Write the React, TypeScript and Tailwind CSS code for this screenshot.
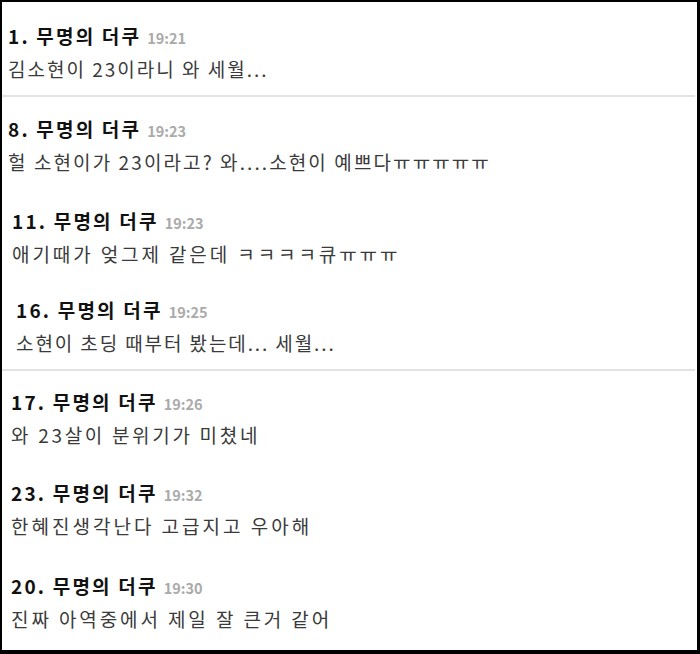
import React from "react";

type Item = { n: string; time: string; body: string; pl: string; mt: string; tr?: string };

const font = { fontFamily: '"Malgun Gothic", "Noto Sans CJK KR", "Noto Sans", sans-serif' };

function Comment({ item }: { item: Item }) {
  return (
    <div className={`${item.pl} ${item.mt}`}>
      <div className="h-[33px] leading-[33px] flex items-baseline gap-[6px] whitespace-nowrap">
        <span className="text-[19px] tracking-[2.2px] font-bold text-[#111]">{item.n}. 무명의 더쿠</span>
        <span className="text-[14.5px] font-bold text-[#aaaaaa]">{item.time}</span>
      </div>
      <div className={`h-[33px] leading-[33px] text-[19px] ${item.tr ?? "tracking-[2px]"} text-[#3a3a3a] whitespace-nowrap`}>{item.body}</div>
    </div>
  );
}

export default function App() {
  const s1: Item[] = [{ n: "1", time: "19:21", body: "김소현이 23이라니 와 세월...", pl: "pl-[6px]", mt: "mt-[17px]" }];
  const s2: Item[] = [
    { n: "8", time: "19:23", body: "헐 소현이가 23이라고? 와....소현이 예쁘다ㅠㅠㅠㅠㅠ", pl: "pl-[6px]", mt: "mt-[15px]", tr: "tracking-[2.1px]" },
    { n: "11", time: "19:23", body: "애기때가 엊그제 같은데 ㅋㅋㅋㅋ큐ㅠㅠㅠ", pl: "pl-[10px]", mt: "mt-[26px]", tr: "tracking-[2.9px]" },
    { n: "16", time: "19:25", body: "소현이 초딩 때부터 봤는데... 세월...", pl: "pl-[14px]", mt: "mt-[23px]", tr: "tracking-[1.9px]" },
  ];
  const s3: Item[] = [
    { n: "17", time: "19:26", body: "와 23살이 분위기가 미쳤네", pl: "pl-[9px]", mt: "mt-[14px]", tr: "tracking-[2.7px]" },
    { n: "23", time: "19:32", body: "한혜진생각난다 고급지고 우아해", pl: "pl-[9px]", mt: "mt-[25px]", tr: "tracking-[3px]" },
    { n: "20", time: "19:30", body: "진짜 아역중에서 제일 잘 큰거 같어", pl: "pl-[9px]", mt: "mt-[27px]", tr: "tracking-[2.9px]" },
  ];
  return (
    <div style={font} className="w-[700px] h-[654px] bg-white border-t-2 border-l-2 border-r-[3px] border-b-4 border-black overflow-hidden">
      <div>
        {s1.map((it) => <Comment key={it.n} item={it} />)}
      </div>
      <div className="mt-[10px] mr-[2px] h-[2px] bg-[#e3e3e3]" />
      <div>
        {s2.map((it) => <Comment key={it.n} item={it} />)}
      </div>
      <div className="mt-[10px] mr-[2px] h-[2px] bg-[#e3e3e3]" />
      <div>
        {s3.map((it) => <Comment key={it.n} item={it} />)}
      </div>
    </div>
  );
}
